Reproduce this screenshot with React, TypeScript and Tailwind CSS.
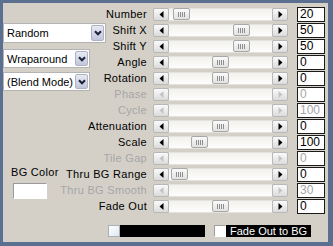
import React from "react";

type RowProps = {
  label: string;
  value: string;
  thumb?: number;
  disabled?: boolean;
};

function ArrowBtn({ dir, disabled }: { dir: "left" | "right"; disabled?: boolean }) {
  const color = disabled ? "#c4c4c4" : "#000000";
  return (
    <div className="flex h-[13px] w-4 shrink-0 items-center justify-center rounded-[2px] border border-[#b8b8b8] bg-gradient-to-b from-[#fbfbfb] to-[#dcdcdc]">
      <svg width="5" height="7" viewBox="0 0 5 7">
        {dir === "left" ? (
          <polygon points="4.5,0 0.5,3.5 4.5,7" fill={color} />
        ) : (
          <polygon points="0.5,0 4.5,3.5 0.5,7" fill={color} />
        )}
      </svg>
    </div>
  );
}

function Thumb({ left }: { left: number }) {
  return (
    <div
      className="flex h-[12px] w-[17px] items-center justify-center gap-[1px] rounded-[2px] border border-[#a8a8a8] bg-gradient-to-b from-[#fafafa] to-[#e2e2e2]"
      style={{ marginLeft: left }}
    >
      <div className="h-[5px] w-px bg-[#8e8e8e]" />
      <div className="h-[5px] w-px bg-[#8e8e8e]" />
      <div className="h-[5px] w-px bg-[#8e8e8e]" />
      <div className="h-[5px] w-px bg-[#8e8e8e]" />
    </div>
  );
}

function Row({ label, value, thumb, disabled }: RowProps) {
  return (
    <div className="flex h-4 items-center">
      <div className="flex w-[41px] justify-end whitespace-nowrap tracking-[0.3px]">
        <span className={disabled ? "text-[#a6a6a6]" : "text-black"}>{label}</span>
      </div>
      <div className="ml-[6px] flex h-[13px] w-[135px] items-center">
        <ArrowBtn dir="left" disabled={disabled} />
        <div className="flex h-[13px] flex-1 items-center border-y border-[#e4e2dc] bg-gradient-to-b from-[#f3f2ee] to-[#fdfdfb]">
          {thumb !== undefined && <Thumb left={thumb} />}
        </div>
        <ArrowBtn dir="right" disabled={disabled} />
      </div>
      <div
        className={
          "ml-[9px] h-[15px] w-[28px] border border-[#1a1a1a] bg-white pl-[2px] text-[12px] leading-[13px] " +
          (disabled ? "text-[#a6a6a6]" : "text-black")
        }
      >
        {value}
      </div>
    </div>
  );
}

function Combo({ text, width, height }: { text: string; width: string; height: string }) {
  return (
    <div className={"flex items-stretch border border-[#b4b4b4] bg-white " + width + " " + height}>
      <div className="flex flex-1 items-center overflow-hidden whitespace-nowrap pl-[3px]">{text}</div>
      <div className="m-px flex w-[13px] shrink-0 items-center justify-center rounded-[2px] border border-[#aeb2c6] bg-gradient-to-b from-[#e8eaf2] to-[#c2c6da]">
        <svg width="8" height="6" viewBox="0 0 8 6">
          <path d="M1 1.2 L4 4.3 L7 1.2" stroke="#1c1f3c" strokeWidth="2" fill="none" />
        </svg>
      </div>
    </div>
  );
}

export default function App() {
  const rows: RowProps[] = [
    { label: "Number", value: "20", thumb: 4 },
    { label: "Shift X", value: "50", thumb: 64 },
    { label: "Shift Y", value: "50", thumb: 64 },
    { label: "Angle", value: "0", thumb: 43 },
    { label: "Rotation", value: "0", thumb: 43 },
    { label: "Phase", value: "0", disabled: true },
    { label: "Cycle", value: "100", disabled: true },
    { label: "Attenuation", value: "0", thumb: 43 },
    { label: "Scale", value: "100", thumb: 22 },
    { label: "Tile Gap", value: "0", disabled: true },
    { label: "Thru BG Range", value: "0", thumb: 2 },
    { label: "Thru BG Smooth", value: "30", disabled: true },
    { label: "Fade Out", value: "0", thumb: 43 },
  ];

  return (
    <div className="h-[246px] w-[333px] bg-[#5b6f91] pb-[4px] pl-[3px] pr-[5px] pt-[3px] font-['Liberation_Sans',Arial,sans-serif] text-[11px] leading-[14px] text-black">
      <div className="flex h-full w-full flex-col bg-[#d4d0c8] pt-[3px]">
        <div className="flex">
          <div className="flex w-[103px] flex-col">
            <div className="mt-[17px]">
              <Combo text="Random" width="w-[103px]" height="h-[20px]" />
            </div>
            <div className="mt-[6px]">
              <Combo text="Wraparound" width="w-[87px]" height="h-[19px]" />
            </div>
            <div className="mt-[4px]">
              <Combo text="(Blend Mode)" width="w-[87px]" height="h-[19px]" />
            </div>
            <div className="mt-[74px] pl-[8px] leading-[14px] tracking-[0.3px]">BG Color</div>
            <div className="ml-[10px] mt-[4px] h-[16px] w-[34px] border border-[#9a9a9a] border-b-white border-r-white bg-white" />
          </div>
          <div className="flex flex-col">
            {rows.map((r) => (
              <Row key={r.label} {...r} />
            ))}
          </div>
        </div>
        <div className="mt-[11px] flex h-[12px] pl-[105px] text-[11px]">
          <div className="h-[12px] w-[12px] border border-[#a8b0bc] bg-gradient-to-br from-white to-[#dfe8f2]" />
          <div className="h-[12px] w-[85px] bg-black" />
          <div className="ml-[9px] h-[12px] w-[12px] border border-[#a0a0a0] border-b-white border-r-white bg-white" />
          <div className="flex h-[12px] w-[85px] items-center bg-black pl-[4px] text-white">Fade Out to BG</div>
        </div>
      </div>
    </div>
  );
}
